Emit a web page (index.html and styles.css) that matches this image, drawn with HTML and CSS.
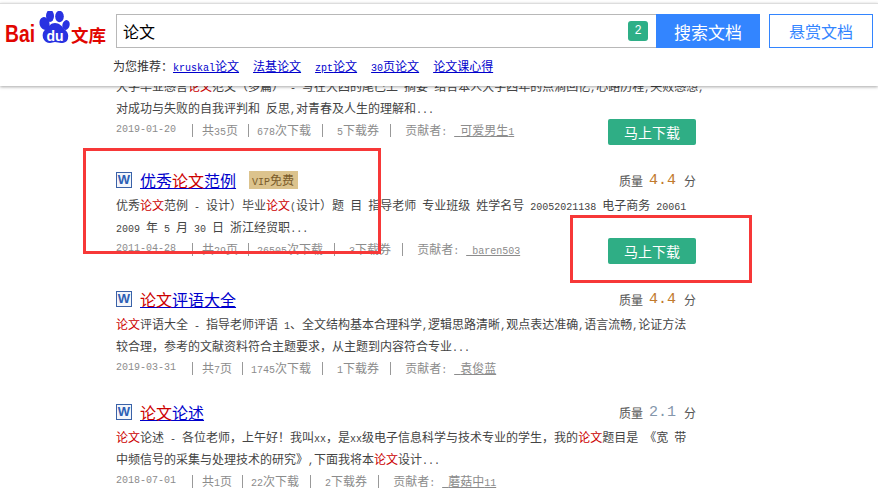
FILE: index.html
```html
<!DOCTYPE html>
<html lang="zh-CN">
<head>
    <meta charset="UTF-8">
    <title>论文 - 百度文库</title>
    <link rel="stylesheet" href="styles.css">
</head>
<body>
    <div class="header">
        <div class="search-row">
            <div class="logo">
                <svg width="106" height="38" viewBox="0 0 106 38">
                    <text class="logo-bai" x="0" y="31" textLength="30" lengthAdjust="spacingAndGlyphs">Bai</text>
                    <ellipse cx="39.5" cy="12.5" rx="5" ry="6.5" fill="#2932e1" transform="rotate(-15 39.5 12.5)"/>
                    <ellipse cx="45" cy="5" rx="4" ry="6" fill="#2932e1"/>
                    <ellipse cx="54.5" cy="5.5" rx="4.3" ry="5.7" fill="#2932e1"/>
                    <ellipse cx="61" cy="14" rx="3.6" ry="5" fill="#2932e1" transform="rotate(15 61 14)"/>
                    <path d="M50 12c-4 0-6 3-9 6-3 2-4 5-3 9 1 3 4 5 7 5 2 0 3-1 5-1s4 1 6 1c4 0 7-2 7-5 1-4-1-7-4-9-2-3-5-6-9-6z" fill="#2932e1"/>
                    <text class="logo-du" x="50" y="30">du</text>
                    <text class="logo-wk" x="66" y="31">文库</text>
                </svg>
            </div>
            <div class="search-box">
                <span class="query">论文</span>
                <span class="badge">2</span>
            </div>
            <button class="btn-search">搜索文档</button>
            <button class="btn-reward">悬赏文档</button>
        </div>
        <div class="recommend">
            <span class="rec-label">为您推荐：</span>
            <a href="#"><span class="lat">kruskal</span>论文</a>
            <a href="#">法基论文</a>
            <a href="#"><span class="lat">zpt</span>论文</a>
            <a href="#"><span class="lat">30</span>页论文</a>
            <a href="#">论文课心得</a>
        </div>
    </div>

    <div class="results">
        <div class="item">
            <p class="desc">大学毕业感言<em>论文</em>范文（多篇）<span class="lat"> - </span>写在大四的尾巴上<span class="lat"> </span>摘要<span class="lat"> </span>结合本人大学四年的点滴回忆<span class="lat">,</span>心路历程<span class="lat">,</span>失败感想<span class="lat">,</span><br>对成功与失败的自我评判和<span class="lat"> </span>反思<span class="lat">,</span>对青春及人生的理解和<span class="lat">...</span></p>
            <div class="meta">
                <span class="lat date">2019-01-20</span><span class="sep"></span>
                <span>共<span class="lat">35</span>页</span><span class="sep"></span>
                <span><span class="lat">678</span>次下载</span><span class="sep wide"></span>
                <span><span class="lat">5</span>下载券</span><span class="sep wide"></span>
                <span>贡献者<span class="lat">:</span></span>
                <a class="author" href="#"><span class="lat"> </span>可爱男生<span class="lat">1</span></a>
                <button class="btn-download">马上下载</button>
            </div>
        </div>

        <div class="item">
            <div class="title-row">
                <span class="word-icon">W</span>
                <a class="title" href="#">优秀<em>论文</em>范例<span class="title-tail"></span></a>
                <span class="vip"><span class="lat">VIP</span>免费</span>
                <span class="quality">质量<b>4.4</b>分</span>
            </div>
            <p class="desc">优秀<em>论文</em>范例<span class="lat"> - </span>设计）毕业<em>论文</em><span class="lat">(</span>设计）题<span class="lat"> </span>目<span class="lat"> </span>指导老师<span class="lat"> </span>专业班级<span class="lat"> </span>姓学名号<span class="lat"> 20052021138 </span>电子商务<span class="lat"> 20061</span><br><span class="lat">2009 </span>年<span class="lat"> 5 </span>月<span class="lat"> 30 </span>日<span class="lat"> </span>浙江经贸职<span class="lat">...</span></p>
            <div class="meta">
                <span class="lat date">2011-04-28</span><span class="sep"></span>
                <span>共<span class="lat">29</span>页</span><span class="sep"></span>
                <span><span class="lat">26505</span>次下载</span><span class="sep wide"></span>
                <span><span class="lat">3</span>下载券</span><span class="sep wide"></span>
                <span>贡献者<span class="lat">:</span></span>
                <a class="author" href="#"><span class="lat"> baren503</span></a>
                <button class="btn-download">马上下载</button>
            </div>
        </div>

        <div class="item">
            <div class="title-row">
                <span class="word-icon">W</span>
                <a class="title" href="#"><em>论文</em>评语大全</a>
                <span class="quality">质量<b>4.4</b>分</span>
            </div>
            <p class="desc"><em>论文</em>评语大全<span class="lat"> - </span>指导老师评语<span class="lat"> 1</span>、全文结构基本合理科学<span class="lat">,</span>逻辑思路清晰<span class="lat">,</span>观点表达准确<span class="lat">,</span>语言流畅<span class="lat">,</span>论证方法<br>较合理，参考的文献资料符合主题要求，从主题到内容符合专业<span class="lat">...</span></p>
            <div class="meta">
                <span class="lat date">2019-03-31</span><span class="sep"></span>
                <span>共<span class="lat">7</span>页</span><span class="sep"></span>
                <span><span class="lat">1745</span>次下载</span><span class="sep wide"></span>
                <span><span class="lat">1</span>下载券</span><span class="sep wide"></span>
                <span>贡献者<span class="lat">:</span></span>
                <a class="author" href="#"><span class="lat"> </span>袁俊蓝</a>
            </div>
        </div>

        <div class="item">
            <div class="title-row">
                <span class="word-icon">W</span>
                <a class="title" href="#"><em>论文</em>论述</a>
                <span class="quality">质量<b class="low">2.1</b>分</span>
            </div>
            <p class="desc"><em>论文</em>论述<span class="lat"> - </span>各位老师，上午好！我叫<span class="lat">xx</span>，是<span class="lat">xx</span>级电子信息科学与技术专业的学生，我的<em>论文</em>题目是<span class="lat"> </span>《宽<span class="lat"> </span>带<br>中频信号的采集与处理技术的研究》<span class="lat">,</span>下面我将本<em>论文</em>设计<span class="lat">...</span></p>
            <div class="meta">
                <span class="lat date">2018-07-01</span><span class="sep"></span>
                <span>共<span class="lat">1</span>页</span><span class="sep"></span>
                <span><span class="lat">22</span>次下载</span><span class="sep wide"></span>
                <span><span class="lat">2</span>下载券</span><span class="sep wide"></span>
                <span>贡献者<span class="lat">:</span></span>
                <a class="author" href="#"><span class="lat"> </span>蘑菇中<span class="lat">11</span></a>
            </div>
        </div>
    </div>

    <!-- red annotation boxes drawn over the screenshot -->
    <div class="mark mark-title"></div>
    <div class="mark mark-button"></div>
</body>
</html>
```

FILE: styles.css
```css
html, body {
    height: 100%;
}
body {
    margin: 0;
    overflow: hidden;
    background-color: #fff;
    color: #444;
    font-family: "Noto Sans CJK SC", "Liberation Sans", sans-serif;
    font-size: 12px;
}
em {
    font-style: normal;
    color: #c00;
}
/* latin runs: 6px per character, like the bitmap font in the original */
.lat {
    font-family: "Liberation Mono", monospace;
    font-size: 10px;
    line-height: 1;
    white-space: pre;
}

/* header */
.header {
    position: absolute;
    top: 3px;
    left: 0;
    right: 0;
    z-index: 2;
    height: 82px;
    background-color: #fff;
    border-top: 1px solid #ddd;
    box-shadow: 0 1px 3px rgba(0,0,0,0.35);
}
.search-row {
    display: flex;
    padding-top: 10px;
}
.logo {
    width: 116px;
    height: 34px;
    padding-left: 5px;
    box-sizing: border-box;
}
.logo svg {
    display: block;
    margin-top: -3px;
}
.logo-bai {
    font-family: "Liberation Sans", sans-serif;
    font-weight: bold;
    font-size: 24px;
    fill: #e10601;
}
.logo-du {
    font-family: "Liberation Sans", sans-serif;
    font-weight: bold;
    font-size: 14px;
    fill: #fff;
    text-anchor: middle;
}
.logo-wk {
    font-family: "Noto Sans CJK SC", sans-serif;
    font-weight: bold;
    font-size: 17.5px;
    fill: #e10601;
}
.search-box {
    display: flex;
    align-items: center;
    justify-content: space-between;
    width: 540px;
    height: 34px;
    box-sizing: border-box;
    padding: 0 8px 0 6px;
    border: 1px solid #b8b8b8;
    border-right: none;
}
.query {
    font-size: 16px;
    color: #000;
}
.badge {
    width: 20px;
    height: 20px;
    line-height: 20px;
    text-align: center;
    font-family: "Liberation Mono", monospace;
    font-size: 12px;
    color: #fff;
    background-color: #2eaf87;
    border-radius: 3px;
}
.btn-search, .btn-reward {
    width: 104px;
    height: 34px;
    padding: 0;
    font-family: inherit;
    cursor: pointer;
}
.btn-search {
    font-size: 17px;
    color: #fff;
    background-color: #3385ff;
    border: none;
}
.btn-reward {
    margin-left: 9px;
    font-size: 16px;
    color: #3385ff;
    background-color: #fff;
    border: 1px solid #3385ff;
}
.recommend {
    display: flex;
    gap: 14px;
    margin: 9px 0 0 113px;
    line-height: 18px;
    color: #333;
}
.rec-label {
    margin-right: -14px;
}
.recommend a {
    color: #00c;
}

/* result list */
.results {
    width: 580px;
    margin-left: 116px;
    padding-top: 75px;
}
.item {
    margin-bottom: 22px;
}
.title-row {
    display: flex;
    align-items: center;
    height: 24px;
    margin-bottom: 2px;
}
.word-icon {
    width: 14px;
    height: 14px;
    line-height: 14px;
    margin-right: 8px;
    text-align: center;
    font-family: "Liberation Sans", sans-serif;
    font-weight: bold;
    font-size: 13px;
    color: #2d5fb5;
    background-color: #f4f6fb;
    border: 1px solid #3a62a8;
}
.title {
    font-size: 16px;
    line-height: 22px;
    color: #00c;
}
.title-tail {
    display: inline-block;
    width: 9px;
}
.vip {
    height: 18px;
    line-height: 18px;
    margin-left: 4px;
    padding: 0 4px 0 3px;
    color: #7a5c2a;
    background-color: #dcc38d;
}
.quality {
    display: flex;
    align-items: center;
    margin-left: auto;
    color: #555;
}
.quality b {
    margin: 0 8px 0 6px;
    font-family: "Liberation Mono", monospace;
    font-weight: normal;
    font-size: 15px;
    color: #c17a2d;
}
.quality b.low {
    color: #8496ab;
}
.desc {
    margin: 0;
    line-height: 22px;
    white-space: nowrap;
}
.meta {
    display: flex;
    align-items: flex-start;
    line-height: 20px;
    color: #8c8c8c;
    white-space: nowrap;
}
.meta > span:not(.sep), .author {
    margin-top: 1px;
}
.date {
    margin-right: 6px;
    line-height: 20px;
}
.sep {
    width: 1px;
    height: 13px;
    margin: 5px 8px 0 10px;
    background-color: #999;
}
.date + .sep {
    margin-right: 9px;
}
.sep.wide {
    margin-left: 11px;
    margin-right: 14px;
}
.author {
    margin-left: 7px;
    color: #8c8c8c;
}
.btn-download {
    width: 88px;
    height: 26px;
    margin: 0 0 1px auto;
    padding: 0;
    font-family: inherit;
    font-size: 14px;
    color: #fff;
    background-color: #2fae85;
    border: none;
    border-radius: 2px;
    cursor: pointer;
}

/* annotation boxes */
.mark {
    position: absolute;
    box-sizing: border-box;
    border: 3px solid #f73838;
}
.mark-title {
    left: 83px;
    top: 148px;
    width: 298px;
    height: 106px;
}
.mark-button {
    left: 570px;
    top: 215px;
    width: 182px;
    height: 68px;
}
```
